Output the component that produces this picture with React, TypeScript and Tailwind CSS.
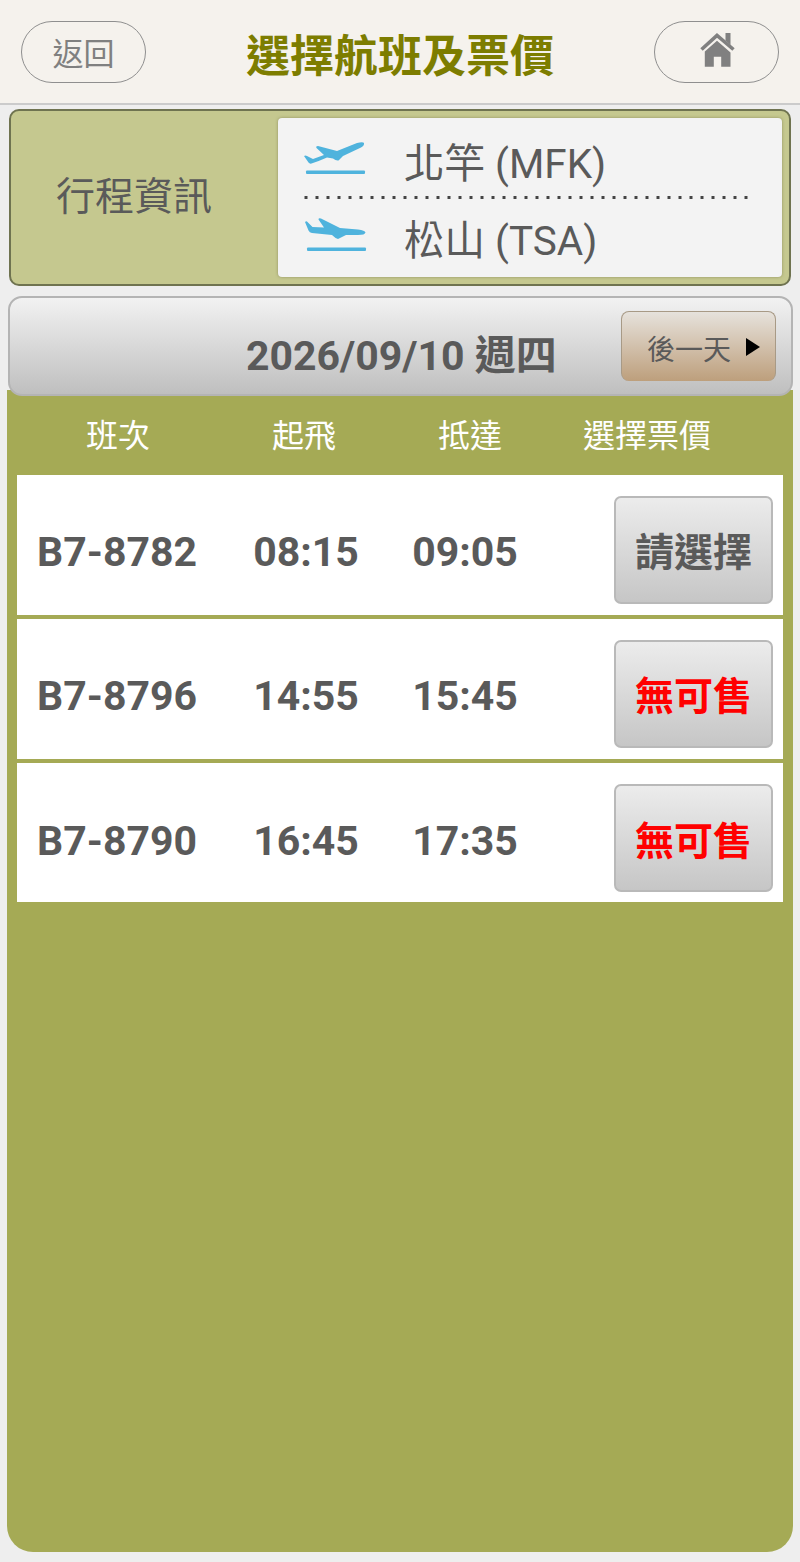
import { FC } from 'react';

const flights = [
	{ no: 'B7-8782', dep: '08:15', arr: '09:05', label: '請選擇', open: true },
	{ no: 'B7-8796', dep: '14:55', arr: '15:45', label: '無可售', open: false },
	{ no: 'B7-8790', dep: '16:45', arr: '17:35', label: '無可售', open: false },
];

const TakeoffIcon: FC = () => (
	<svg width="70" height="40" viewBox="0 0 70 40" className="shrink-0">
		<path
			d="M4 21 Q5.5 20 7 21 L13 24 L24 20 L16.5 13 Q15.5 11 18 11 L37 16 L57 8 Q63 6.5 64 8 Q64.5 10.5 61 12.5 L43 21 L38.5 25.5 Q36 26 33 23.5 L27 22.5 Q18 26.5 11.5 28.5 Q9.5 29 8.5 27.5 Z"
			fill="#4fb3dd"
		/>
		<rect x="6" y="35.5" width="59" height="3.4" rx="1" fill="#4fb3dd" />
	</svg>
);

const LandingIcon: FC = () => (
	<svg width="70" height="40" viewBox="0 0 70 40" className="shrink-0">
		<path
			d="M5 5 Q6.5 3.5 7.5 5 L12.5 10 L24 10.5 L18.5 2.5 Q18.5 0.5 21 1.5 L40 11 L58 12.5 Q65 13.5 65.5 15.5 Q65 18 58 18 L46 18 L38 22 Q35.5 21.5 32 18 L12 16 Q9.5 15.5 8.5 13.5 Z"
			fill="#4fb3dd"
		/>
		<rect x="7" y="30.5" width="59" height="3.4" rx="1" fill="#4fb3dd" />
	</svg>
);

const HomeIcon: FC = () => (
	<svg width="36" height="36" viewBox="0 0 36 36">
		<path d="M2.5 17.5 L18 3.5 L34.5 17.5" fill="none" stroke="#808080" strokeWidth="3.6" />
		<path d="M26.5 1 H31.5 V13 L26.5 8.5 Z" fill="#808080" />
		<path d="M5.8 19.5 L18 8.8 L31.5 20.5 V34.7 H22.2 V24.7 H14.8 V34.7 H5.8 Z" fill="#808080" />
	</svg>
);

const selectClass =
	'ml-[79px] h-[108px] w-[159px] rounded-[7px] border-2 border-[#b9b9b9] bg-gradient-to-b from-[#ececec] to-[#c6c6c6] pt-[8px] text-[39px] leading-none font-bold';

export default function App() {
	return (
		<div className="flex h-[1562px] w-[800px] flex-col bg-[#eeeeee] font-['Roboto','Noto_Sans_CJK_TC',sans-serif] text-[#5a5a5a]">
			<header className="flex h-[105px] shrink-0 items-center justify-between border-b-2 border-[#cbcbcb] bg-[#f5f2ed] px-[21px] pt-[1px]">
				<button className="flex h-[62px] w-[125px] items-center justify-center rounded-full border border-[#8f8f8f] pt-[4px] text-[31px] leading-none text-[#808080]">
					返回
				</button>
				<h1 className="pt-[9px] text-[44px] leading-none font-bold text-[#7d7d00]">選擇航班及票價</h1>
				<button className="flex h-[62px] w-[125px] items-center justify-center rounded-full border border-[#8f8f8f] pb-[4px]">
					<HomeIcon />
				</button>
			</header>

			<section className="mx-[9px] mt-[4px] flex h-[177px] shrink-0 rounded-[10px] border-2 border-[#6f7350] bg-[#c5c88f] p-[7px]">
				<div className="flex w-[260px] items-center justify-center pr-[28px] text-[39px] leading-none">行程資訊</div>
				<div className="flex flex-1 flex-col rounded-[4px] bg-[#f3f3f3] pr-[30px] pl-[26px] shadow-[0_0_3px_rgba(90,90,50,0.5)]">
					<div className="flex h-[78px] items-start gap-[34px] text-[40.5px] leading-none">
						<div className="mt-[17px] -ml-[4px] w-[70px]">
							<TakeoffIcon />
						</div>
						<span className="mt-[26px]">北竿 (MFK)</span>
					</div>
					<div className="h-[3px] bg-[radial-gradient(circle,#444444_1.5px,transparent_1.7px)] bg-[length:11px_3px] bg-[position:-3.5px_0]" />
					<div className="flex flex-1 items-start gap-[34px] text-[40.5px] leading-none">
						<div className="mt-[18px] -ml-[4px] w-[70px]">
							<LandingIcon />
						</div>
						<span className="mt-[22px]">松山 (TSA)</span>
					</div>
				</div>
			</section>

			<section className="mx-[7px] mt-[10px] mb-[10px] flex flex-1 flex-col">
				<div className="relative z-10 ml-[1px] flex h-[100px] shrink-0 items-center justify-between rounded-[14px] border-2 border-[#b4b4b4] bg-gradient-to-b from-[#f2f2f2] to-[#bfbfbf] pr-[15px] pl-[236px]">
					<div className="pt-[20px] text-[41px] leading-none font-bold">2026/09/10 週四</div>
					<button className="flex h-[70px] w-[155px] items-center justify-center gap-[15px] rounded-[8px] border border-[#a89a86] border-b-0 bg-gradient-to-b from-[#e6e2dc] to-[#bd9f7c] pt-[9px] pl-[10px] text-[28px] leading-none">
						後一天
						<span className="-mt-[8px] h-0 w-0 border-y-[9px] border-l-[14px] border-y-transparent border-l-black" />
					</button>
				</div>

				<div className="-mt-[6px] flex flex-1 flex-col rounded-b-[26px] bg-[#a5aa55] px-[10px] pt-[6px]">
					<div className="-mx-[10px] flex h-[79px] items-center text-center text-[32px] leading-none text-white">
						<div className="w-[222px]">班次</div>
						<div className="w-[150px]">起飛</div>
						<div className="w-[182px]">抵達</div>
						<div className="w-[172px]">選擇票價</div>
					</div>
					<div className="flex flex-col gap-[4px]">
						{flights.map((f) => (
							<div key={f.no} className="flex h-[140px] items-center bg-white pt-[9px] text-center text-[41px] leading-none font-bold last:h-[139px] last:pt-[11px]">
								<div className="w-[200px] pt-[6px]">{f.no}</div>
								<div className="w-[178px] pt-[6px]">{f.dep}</div>
								<div className="w-[140px] pt-[6px]">{f.arr}</div>
								<button className={f.open ? `${selectClass} text-[#5a5a5a]` : `${selectClass} text-[#ff0000]`}>{f.label}</button>
							</div>
						))}
					</div>
				</div>
			</section>
		</div>
	);
}
